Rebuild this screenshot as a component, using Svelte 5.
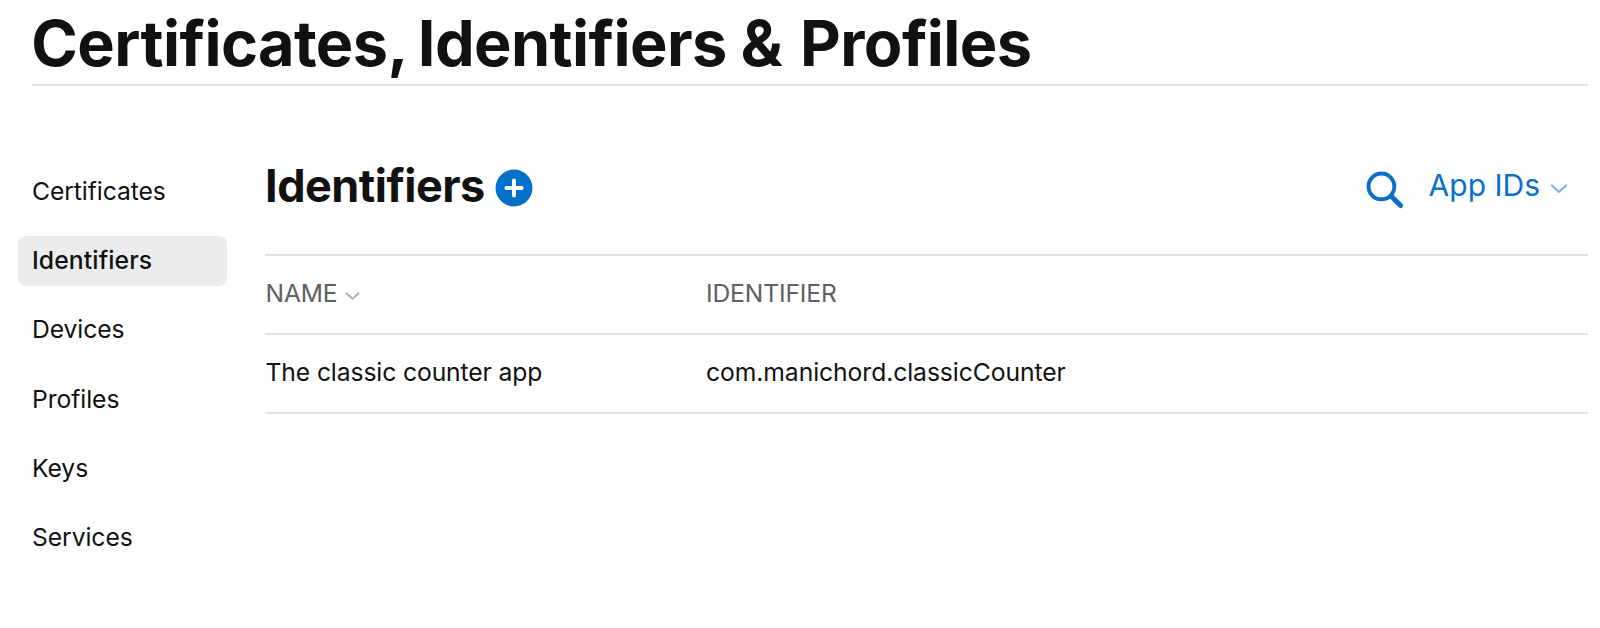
<script>
  const nav = ['Certificates', 'Identifiers', 'Devices', 'Profiles', 'Keys', 'Services'];
  const active = 'Identifiers';
  const rows = [{ name: 'The classic counter app', identifier: 'com.manichord.classicCounter' }];
</script>

<div class="page">
  <header><h1>Certificates, Identifiers <span class="amp">&amp;</span> Profiles</h1></header>
  <div class="body">
    <nav>
      {#each nav as item}
        <a class:active={item === active}>{item}</a>
      {/each}
    </nav>
    <main>
      <div class="toolbar">
        <h2>Identifiers</h2>
        <svg class="add" viewBox="0 0 38 38" width="38" height="38">
          <circle cx="19" cy="19" r="18.5" fill="#0070c9" />
          <path d="M19 11.4v15.2M11.4 19h15.2" stroke="#fff" stroke-width="4" stroke-linecap="round" />
        </svg>
        <div class="filters">
          <svg class="search" viewBox="0 0 38 38" width="38" height="38" fill="none" stroke="#0a6fc7">
            <circle cx="15.4" cy="15.4" r="12.9" stroke-width="3.9" />
            <path d="M25 25l9.6 9.6" stroke-width="4.9" stroke-linecap="round" />
          </svg>
          <span class="filter">App IDs</span>
          <svg class="chev" viewBox="0 0 18 10" width="18" height="10" fill="none" stroke="#84b7e4" stroke-width="2.2">
            <path d="M1.8 1.4L9 7.9l7.2-6.5" stroke-linecap="round" stroke-linejoin="round" />
          </svg>
        </div>
      </div>
      <div class="row head">
        <div class="cell">NAME
          <svg viewBox="0 0 15 9" width="15" height="9" fill="none" stroke="#b0b0b0" stroke-width="2">
            <path d="M1.6 1.4l5.9 5.4 5.9-5.4" stroke-linecap="round" stroke-linejoin="round" />
          </svg>
        </div>
        <div class="cell">IDENTIFIER</div>
      </div>
      {#each rows as row}
        <div class="row">
          <div class="cell name">{row.name}</div>
          <div class="cell ident">{row.identifier}</div>
        </div>
      {/each}
    </main>
  </div>
</div>

<style>
  :global(body) { background: #fff; }
  .page {
    box-sizing: border-box;
    width: 1600px;
    height: 628px;
    overflow: hidden;
    padding: 0 12px 0 32px;
    color: #111;
    font-family: Inter, 'Liberation Sans', sans-serif;
    font-size: 24.7px;
    font-weight: 400;
  }
  header { border-bottom: 2px solid #e3e3e3; padding-top: 2px; }
  h1 { margin: 0 0 0 -0.7px; font-size: 63px; line-height: 82px; font-weight: 700; letter-spacing: -0.6px; word-spacing: -2.5px; white-space: nowrap; }
  .amp { margin-left: 2px; letter-spacing: 5.5px; }
  .body { display: flex; }
  nav { display: flex; flex-direction: column; gap: 19.2px; width: 209px; margin-left: -14px; padding-top: 81px; }
  nav a { box-sizing: border-box; height: 50px; padding: 0 0 2px 14px; line-height: 48px; border-radius: 8px; letter-spacing: -0.08px; }
  nav a.active { background: #ececec; font-weight: 500; letter-spacing: 0.12px; }
  main { flex: 1; margin-left: 38px; }
  .toolbar { box-sizing: border-box; display: flex; align-items: center; height: 168px; padding-top: 32px; }
  h2 { margin: 0; width: 221px; font-size: 45px; line-height: 60px; font-weight: 700; letter-spacing: -0.5px; white-space: nowrap; }
  .add { margin: 4.6px 0 0 9px; }
  .filters { display: flex; align-items: center; margin-left: auto; padding-right: 20px; color: #0a6fc7; font-size: 30px; line-height: 40px; }
  .filter { margin-top: -1.4px; }
  .search { margin: 7px 25px 0 0; }
  .chev { margin: 5px 0 0 10px; }
  .row { box-sizing: border-box; display: grid; grid-template-columns: 440.5px 1fr; height: 79px; border-top: 2px solid #e3e3e3; line-height: 74px; }
  .row:last-child { height: 81px; border-bottom: 2px solid #e3e3e3; }
  .head { color: #606060; font-size: 24.6px; letter-spacing: -0.12px; }
  .cell { display: flex; padding-left: 0.5px; }
  .head svg { margin: 36px 0 0 7px; }
  .name { letter-spacing: -0.12px; }
  .ident { letter-spacing: -0.08px; }
</style>
